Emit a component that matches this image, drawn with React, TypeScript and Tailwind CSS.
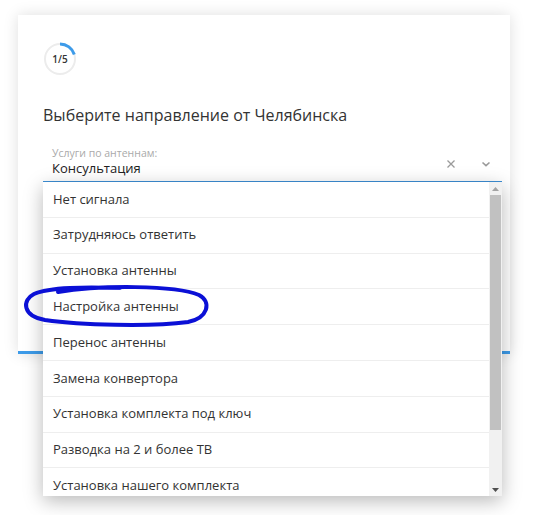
import React from 'react'

const items = [
  'Нет сигнала',
  'Затрудняюсь ответить',
  'Установка антенны',
  'Настройка антенны',
  'Перенос антенны',
  'Замена конвертора',
  'Установка комплекта под ключ',
  'Разводка на 2 и более ТВ',
  'Установка нашего комплекта',
]

const Progress: React.FC<{ step: number; total: number }> = ({ step, total }) => {
  const r = 15
  const c = 2 * Math.PI * r
  return (
    <div className="relative w-[34px] h-[34px]">
      <svg width="34" height="34" viewBox="0 0 34 34" className="absolute inset-0">
        <circle cx="17" cy="17" r={r} fill="none" stroke="#ececec" strokeWidth="2" />
        <circle
          cx="17"
          cy="17"
          r={r}
          fill="none"
          stroke="#3d9be9"
          strokeWidth="3"
          strokeDasharray={`${(c * step) / total} ${c}`}
          transform="rotate(-90 17 17)"
        />
      </svg>
      <div className="absolute inset-0 flex items-center justify-center text-[10px] font-semibold text-[#333]">
        {step}/{total}
      </div>
    </div>
  )
}

export default function App() {
  return (
    <div
      className="relative w-[540px] h-[515px] bg-white overflow-hidden pl-[18px] pt-[15px]"
      style={{ fontFamily: '"Open Sans", "Noto Sans", sans-serif' }}
    >
      {/* card */}
      <div className="w-[492px] h-[339px] bg-white shadow-[0_0_14px_rgba(0,0,0,0.13)] border-b-[3px] border-[#3d9be9] pl-[25px] pr-[8px] pt-[27px]">
        <Progress step={1} total={5} />
        <h2 className="mt-[27px] text-[16px] leading-6 text-[#333]">
          Выберите направление от Челябинска
        </h2>
        <div className="mt-[20px] w-[459px] border-b-2 border-[#3d8fd6] flex items-end pl-[9px] pb-[4px]">
          <div className="flex-1 flex flex-col">
            <span className="text-[10.5px] leading-[13px] text-[#aaa]">Услуги по антеннам:</span>
            <span className="text-[13px] leading-[17px] text-[#222]">Консультация</span>
          </div>
          <div className="flex items-center gap-[25px] pb-[8px] pr-[11px] text-[#999]">
            <svg width="10" height="10" viewBox="0 0 10 10">
              <path d="M1.5 1.5l7 7M8.5 1.5l-7 7" stroke="#9a9a9a" strokeWidth="1.3" />
            </svg>
            <svg width="10" height="8" viewBox="0 0 10 8">
              <path d="M1.5 2.5l3.5 3.2 3.5-3.2" stroke="#9a9a9a" strokeWidth="1.6" fill="none" />
            </svg>
          </div>
        </div>
      </div>

      {/* dropdown menu */}
      <div className="absolute left-[43px] top-[182px] w-[459px] h-[314px] bg-white shadow-[0_5px_18px_rgba(0,0,0,0.28)] flex overflow-hidden">
        <ul className="flex-1">
          {items.map((it) => (
            <li
              key={it}
              className="h-[35.8px] flex items-center pl-[10px] text-[13px] text-[#333] border-b border-[#eeeeee]"
            >
              {it}
            </li>
          ))}
        </ul>
        <div className="w-[13px] bg-[#f1f1f1] flex flex-col items-center">
          <div className="h-[13px] flex items-center justify-center">
            <svg width="7" height="4" viewBox="0 0 7 4">
              <path d="M0 4L3.5 0 7 4z" fill="#a3a3a3" />
            </svg>
          </div>
          <div className="w-[11px] h-[235px] bg-[#c1c1c1]" />
          <div className="flex-1" />
          <div className="h-[13px] flex items-center justify-center">
            <svg width="7" height="4" viewBox="0 0 7 4">
              <path d="M0 0L3.5 4 7 0z" fill="#505050" />
            </svg>
          </div>
        </div>
      </div>

      {/* hand-drawn highlight */}
      <svg
        className="absolute left-0 top-0 pointer-events-none"
        width="540"
        height="515"
        viewBox="0 0 540 515"
      >
        <path
          d="M58 292 C 100 285, 175 285, 199 295 C 212 302, 208 318, 188 322 C 150 327, 80 325, 45 320 C 22 316, 22 300, 34 294 C 50 287, 85 287, 120 288"
          fill="none"
          stroke="#0b10d6"
          strokeWidth="4"
          strokeLinecap="round"
        />
      </svg>
    </div>
  )
}
